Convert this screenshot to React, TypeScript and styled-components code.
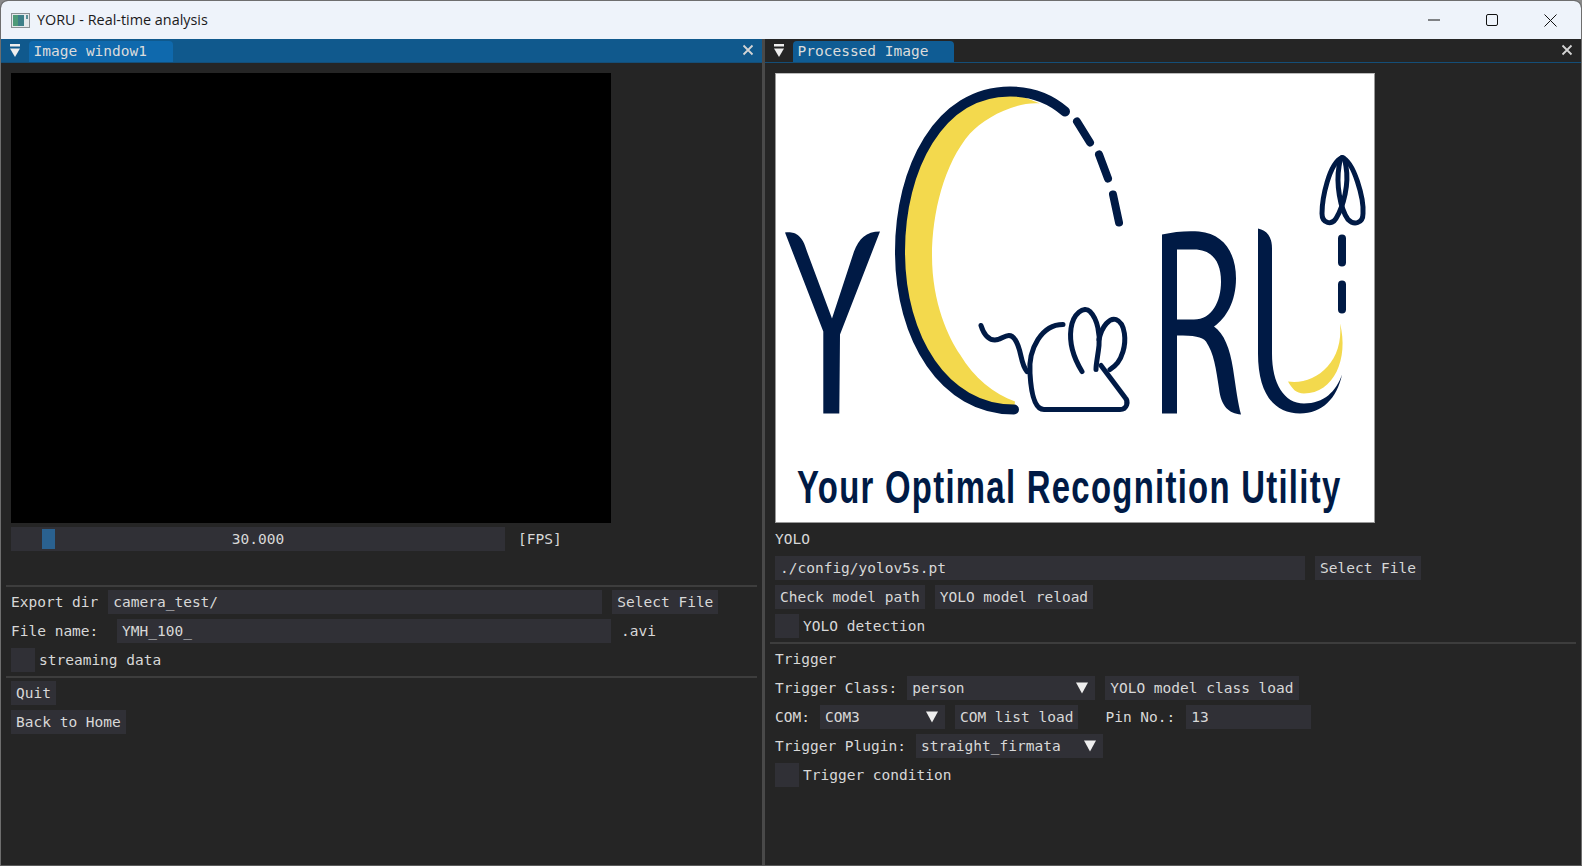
import React from "react";
import styled, { createGlobalStyle } from "styled-components";

const Global = createGlobalStyle`
  html, body { margin: 0; padding: 0; background: #8a8a8a; overflow: hidden; }
  * { box-sizing: border-box; }
`;

const Win = styled.div`
  width: 1582px; height: 866px; display: flex; flex-direction: column;
  border-radius: 8px 8px 0 0; overflow: hidden;
  border: 1px solid #6e6e6e; border-bottom-color: #5a5a5a;
  background: #252525;
`;
const TitleBar = styled.div`
  height: 38px; flex: none; display: flex; align-items: center;
  background: #eef3fa; padding: 0 1px 0 10px;
  font: 14.4px "Open Sans", "Noto Sans", sans-serif; color: #1a1a1a;
`;
const AppIcon = styled.svg`width: 19px; height: 15px; margin-right: 7px; flex: none;`;
const TitleText = styled.span`flex: 1; margin-bottom: 2px;`;
const CaptionBtn = styled.div`
  width: 58.5px; height: 38px; display: flex; align-items: center; justify-content: center;
`;
const Body = styled.div`flex: 1; display: flex; min-height: 0;`;
const Pane = styled.div<{ $w: string }>`
  width: ${p => p.$w}; flex: none; display: flex; flex-direction: column; min-width: 0;
`;
const Splitter = styled.div`width: 3px; flex: none; background: #494949;`;
const Header = styled.div<{ $active?: boolean }>`
  height: 24px; flex: none; display: flex; align-items: flex-end; position: relative;
  background: ${p => (p.$active ? "#10598d" : "#252525")};
  border-bottom: 1px solid #144e78;
`;
const Menu = styled.svg`width: 12px; height: 13px; flex: none; margin: 0 8px 5px 8px;`;
const Tab = styled.div<{ $w: number; $active?: boolean }>`
  width: ${p => p.$w}px; height: 21px; border-radius: 4px 4px 0 0;
  background: ${p => (p.$active ? "#0f69ad" : "#0f5c94")};
  padding-left: 4.5px; white-space: pre;
  font: 14.5px/21px "DejaVu Sans Mono", monospace; color: #dcdcdc;
`;
const Close = styled.svg`position: absolute; right: 8px; top: 5px; width: 12px; height: 12px;`;
const Content = styled.div`
  flex: 1; display: flex; flex-direction: column; gap: 5px; padding: 10px 5px 0 10px; min-height: 0;
  font: 14.5px/25px "DejaVu Sans Mono", monospace; color: #d8d8d8; white-space: pre;
`;
const Row = styled.div<{ $gap?: number }>`
  display: flex; height: 24px; flex: none; gap: ${p => p.$gap ?? 10}px;
`;
const Frame = styled.div`width: 600px; height: 450px; background: #000; flex: none; margin-bottom: -1px;`;
const Picture = styled.svg`
  width: 600px; height: 450px; flex: none; display: block; background: #fff; border: 1px solid #999;
  border-top-color: #bbb; margin-bottom: -1px;
`;
const Field = styled.div<{ $w: number }>`
  width: ${p => p.$w}px; height: 24px; flex: none; background: #303036; padding-left: 5px;
  overflow: hidden;
`;
const Slider = styled.div`
  width: 494px; height: 24px; background: #303036; position: relative; text-align: center;
`;
const Grab = styled.div`
  position: absolute; left: 31px; top: 2px; width: 13px; height: 20px; background: #2a618f;
`;
const Btn = styled.div`
  height: 24px; flex: none; background: #303036; padding: 0 5px;
`;
const Check = styled.div`width: 24px; height: 24px; flex: none; background: #303036;`;
const CheckRow = styled(Row)`gap: 4px;`;
const Sep = styled.div`
  height: 2px; flex: none; background: #3d3d3d; margin: -1px 0 -2px -5px;
`;
const Spacer = styled.div<{ $h: number }>`height: ${p => p.$h}px; flex: none;`;
const Combo = styled.div<{ $w: number }>`
  width: ${p => p.$w}px; height: 24px; flex: none; background: #303036; padding-left: 5px;
  position: relative;
`;
const Arrow = styled.svg`position: absolute; right: 7px; top: 6px; width: 12px; height: 12px;`;
const PlainLabel = styled.span<{ $ml?: number; $mr?: number }>`
  margin-left: ${p => p.$ml ?? 0}px; margin-right: ${p => p.$mr ?? 0}px;
`;

const MenuIcon = () => (
  <Menu viewBox="0 0 12 13">
    <rect x="1" y="0" width="10" height="2.5" fill="#eee" />
    <path d="M1 4.5h10L6 13z" fill="#eee" />
  </Menu>
);
const CloseIcon = () => (
  <Close viewBox="0 0 12 12">
    <path d="M1.5 1.5l9 9M10.5 1.5l-9 9" stroke="#d4d4d4" strokeWidth="1.8" />
  </Close>
);
const DropArrow = () => (
  <Arrow viewBox="0 0 12 12">
    <path d="M0 .5h12L6 11.5z" fill="#eee" />
  </Arrow>
);

const NAVY = "#001a45";
const GOLD = "#f3d94d";
const Logo = () => (
  <Picture viewBox="2 0.5 598 448">
    <path d="M266 30C240 28 210 45 196 60C170 90 158 140 158 182C158 230 175 265 186 281C200 305 220 320 241 328L240 336C170 336 126 265 126 178C126 95 165 18 236 18Z" fill={GOLD} />
    <path d="M566 250C575 285 560 320 530 320C522 320 518 315 514 308C540 312 570 290 566 250Z" fill={GOLD} />
    <g fill={NAVY}>
      <path d="M11 159C20 158 28 160 33 178L58 245L80 178C85 165 92 158 106 158L66 261L65.3 340H49.3V258Z" />
      <path
        fillRule="evenodd"
        d="M388 161C400 158 415 157 425 158C450 160 462 180 462 205C462 228 452 245 440 253C450 260 456 275 459 295C462 315 464 330 467 341C455 340 447 333 445 315C442 295 440 280 432 268C428 263 420 262 403 262V340H388ZM403 176V246H420C438 246 447 228 447 208C447 188 438 176 420 176Z"
      />
      <path d="M484 155C493 157 498 163 498 175V280C498 310 510 330 530 330C550 330 562 318 568 301C563 325 548 340 526 340C500 340 484 320 484 280Z" />
    </g>
    <g fill="none" stroke={NAVY} strokeLinecap="round" strokeLinejoin="round">
      <path strokeWidth="10" d="M291 38C275 24 255 18 236 18C165 18 126 95 126 178C126 265 170 336 240 336" />
      <path strokeWidth="8" d="M303 48L316 69M325 81L334 105M339 121L345 149M568 165V189M568 211V236" />
      <path strokeWidth="5" d="M568 84C555 90 548 125 548 140C548 150 558 152 562 145C570 132 575 110 572 93C571 86 570 84 568 84Z" />
      <path strokeWidth="5" d="M568 84C580 88 590 125 589 140C589 150 580 152 574 146C566 135 562 110 565 93C566 86 567 84 568 84Z" />
      <path strokeWidth="5" d="M207 252C210 262 216 268 224 266C230 264 236 258 241 266C248 276 246 290 253 298" />
      <path strokeWidth="5" d="M289 251C268 251 254 275 256 300C257 318 260 336 270 336H346C353 336 355 328 351 324L327 292" />
      <path strokeWidth="5" d="M308 298C300 285 295 270 297 255C299 240 310 232 316 238C324 246 326 262 325 272C324 282 322 290 322 296" />
      <path strokeWidth="5" d="M325 266C328 252 336 244 342 246C352 250 352 268 349 278C346 288 342 292 336 296" />
    </g>
    <text
      transform="translate(23 429) scale(0.7 1)"
      fontFamily="'Liberation Sans', sans-serif"
      fontWeight="700"
      fontSize="47"
      fill={NAVY}
      textLength="776"
      lengthAdjust="spacing"
    >
      Your Optimal Recognition Utility
    </text>
  </Picture>
);

export default function App() {
  return (
    <Win>
      <Global />
      <TitleBar>
        <AppIcon viewBox="0 0 19 15">
          <rect x="0.5" y="0.5" width="18" height="14" fill="#e4e8ea" stroke="#8a9094" />
          <rect x="2" y="2" width="11" height="11" fill="#3d7f88" />
          <rect x="2" y="2" width="5" height="11" fill="#4d9a78" />
          <rect x="15" y="2" width="2" height="4" fill="#5c8f96" />
        </AppIcon>
        <TitleText>YORU - Real-time analysis</TitleText>
        <CaptionBtn>
          <svg width="12" height="2" viewBox="0 0 12 2"><path d="M0 1h12" stroke="#111" strokeWidth="1" /></svg>
        </CaptionBtn>
        <CaptionBtn>
          <svg width="12" height="12" viewBox="0 0 12 12"><rect x="0.5" y="0.5" width="11" height="11" rx="1.5" fill="none" stroke="#111" /></svg>
        </CaptionBtn>
        <CaptionBtn>
          <svg width="13" height="13" viewBox="0 0 13 13"><path d="M.5.5l12 12M12.5.5l-12 12" stroke="#111" /></svg>
        </CaptionBtn>
      </TitleBar>
      <Body>
        <Pane $w="761px">
          <Header $active>
            <MenuIcon />
            <Tab $w={144} $active>Image window1</Tab>
            <CloseIcon />
          </Header>
          <Content>
            <Frame />
            <Row>
              <Slider><Grab />30.000</Slider>
              <PlainLabel $ml={3}>[FPS]</PlainLabel>
            </Row>
            <Spacer $h={25} />
            <Sep />
            <Row>
              <span>Export dir</span>
              <Field $w={494}>camera_test/</Field>
              <Btn>Select File</Btn>
            </Row>
            <Row>
              <span>File name: </span>
              <Field $w={494}>YMH_100_</Field>
              <span>.avi</span>
            </Row>
            <CheckRow><Check /><span>streaming data</span></CheckRow>
            <Sep />
            <Row><Btn>Quit</Btn></Row>
            <Row><Btn>Back to Home</Btn></Row>
          </Content>
        </Pane>
        <Splitter />
        <Pane $w="816px">
          <Header>
            <MenuIcon />
            <Tab $w={161}>Processed Image</Tab>
            <CloseIcon />
          </Header>
          <Content>
            <Logo />
            <Row><span>YOLO</span></Row>
            <Row>
              <Field $w={530}>./config/yolov5s.pt</Field>
              <Btn>Select File</Btn>
            </Row>
            <Row>
              <Btn>Check model path</Btn>
              <Btn>YOLO model reload</Btn>
            </Row>
            <CheckRow><Check /><span>YOLO detection</span></CheckRow>
            <Sep />
            <Row><span>Trigger</span></Row>
            <Row>
              <span>Trigger Class:</span>
              <Combo $w={188}>person<DropArrow /></Combo>
              <Btn>YOLO model class load</Btn>
            </Row>
            <Row>
              <span>COM:</span>
              <Combo $w={125}>COM3<DropArrow /></Combo>
              <Btn>COM list load</Btn>
              <PlainLabel $ml={17} $mr={1}>Pin No.:</PlainLabel>
              <Field $w={125}>13</Field>
            </Row>
            <Row>
              <span>Trigger Plugin:</span>
              <Combo $w={187}>straight_firmata<DropArrow /></Combo>
            </Row>
            <CheckRow><Check /><span>Trigger condition</span></CheckRow>
          </Content>
        </Pane>
      </Body>
    </Win>
  );
}
